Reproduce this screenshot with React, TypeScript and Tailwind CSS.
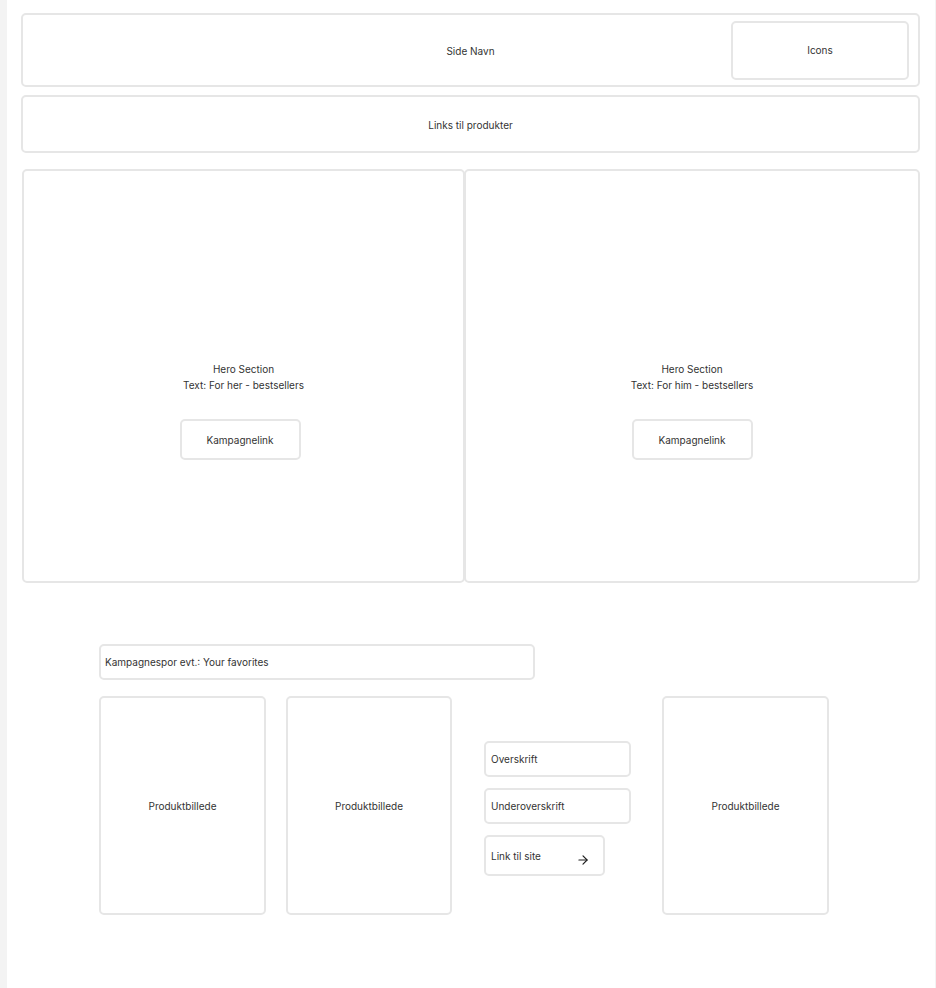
import { ArrowRight } from "lucide-react";

const box = "border-2 border-[#e6e6e6] rounded-[5px] bg-white";

function Hero({ text, shift }: { text: string; shift?: boolean }) {
  return (
    <div className={`${box} h-[414px] flex flex-col items-center pt-[190px]`}>
      <p className="text-center leading-[16px]">
        Hero Section
        <br />
        {text}
      </p>
      <div
        className={`${box} mt-[26px] w-[121px] h-[41px] flex items-center justify-center pt-[1px] ${
          shift ? "-ml-[7px]" : ""
        }`}
      >
        Kampagnelink
      </div>
    </div>
  );
}

function Product() {
  return (
    <div className={`${box} h-[219px] flex items-center justify-center pt-[1px]`}>
      Produktbillede
    </div>
  );
}

export default function App() {
  return (
    <div
      className="flex min-h-[988px] bg-[#f3f3f3] text-[10px] text-[#333333]"
      style={{ fontFamily: "Inter, 'Noto Sans', sans-serif" }}
    >
      <div className="w-[7px] shrink-0" />
      <main className="w-[928px] shrink-0 bg-white pl-[14px] pt-[13px]">
        {/* Header */}
        <header className={`${box} w-[899px] h-[74px] grid grid-cols-[1fr_auto_1fr] items-center pr-[9px]`}>
          <div />
          <span className="pt-[2px] pl-[9px]">Side Navn</span>
          <div className="flex justify-end">
            <div className={`${box} w-[178px] h-[59px] flex items-center justify-center pt-[1px]`}>
              Icons
            </div>
          </div>
        </header>

        {/* Links */}
        <nav className={`${box} mt-[8px] w-[899px] h-[58px] flex items-center justify-center pt-[3px]`}>
          Links til produkter
        </nav>

        {/* Hero */}
        <section className="mt-[16px] ml-[1px] flex w-[898px]">
          <div className="w-[443px]">
            <Hero text="Text: For her - bestsellers" shift />
          </div>
          <div className="w-[456px] -ml-[1px]">
            <Hero text="Text: For him - bestsellers" />
          </div>
        </section>

        {/* Favorites */}
        <section className="mt-[61px] ml-[78px]">
          <div className={`${box} w-[436px] h-[36px] flex items-center pl-[4px] pt-[1px]`}>
            Kampagnespor evt.: Your favorites
          </div>

          <div className="mt-[16px] flex items-start">
            <div className="w-[167px]">
              <Product />
            </div>
            <div className="w-[166px] ml-[20px]">
              <Product />
            </div>

            <div className="ml-[32px] w-[147px] pt-[45px] flex flex-col gap-[11px]">
              <div className={`${box} h-[36px] flex items-center pl-[5px] pt-[1px]`}>Overskrift</div>
              <div className={`${box} h-[36px] flex items-center pl-[5px] pt-[1px]`}>Underoverskrift</div>
              <div className={`${box} w-[121px] h-[41px] flex items-center pl-[5px]`}>
                <span className="mt-[1px]">Link til site</span>
                <ArrowRight
                  className="ml-[35px] mt-[9px] w-[14px] h-[14px] text-[#1e1e1e]"
                  strokeWidth={2}
                />
              </div>
            </div>

            <div className="w-[167px] ml-[31px]">
              <Product />
            </div>
          </div>
        </section>
      </main>
      <div className="w-[1px] shrink-0" />
    </div>
  );
}
